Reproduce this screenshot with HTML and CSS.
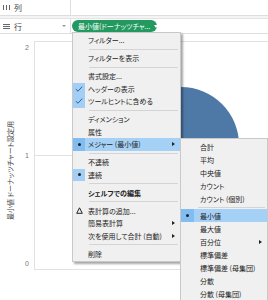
FILE: index.html
```html
<!DOCTYPE html>
<html lang="ja">
<head>
  <meta charset="UTF-8" />
  <title>行シェルフ メニュー</title>
  <link rel="stylesheet" href="styles.css">
</head>
<body>

<!-- シェルフ -->
<div class="shelves">
  <div class="shelf">
    <div class="shelf-label">
      <svg class="shelf-icon" width="7" height="7" viewBox="0 0 7 7"><path d="M0.5 1v5M3.5 1v5M6.5 1v5" stroke="#666" stroke-width="1"/></svg>
      <span>列</span>
    </div>
    <div class="shelf-drop"></div>
  </div>
  <div class="shelf shelf-rows">
    <div class="shelf-label">
      <svg class="shelf-icon" width="7" height="7" viewBox="0 0 7 7"><path d="M0 1.5h7M0 3.5h7M0 5.5h7" stroke="#666" stroke-width="1"/></svg>
      <span>行</span>
      <span class="caret-grey"></span>
    </div>
    <div class="shelf-drop">
      <span class="pill">最小値(ドーナッツチャ...<span class="caret-white"></span></span>
    </div>
  </div>
</div>

<!-- ビュー -->
<div class="view">
  <div class="axis-title"><span>最小値 ドーナッツチャート設定用</span></div>
  <div class="axis-ticks">
    <span>2</span>
    <span>1</span>
    <span>0</span>
  </div>
  <div class="pane">
    <div class="band"></div>
    <div class="band"></div>
    <div class="pie"></div>
  </div>
</div>

<!-- コンテキストメニュー -->
<div class="menu main-menu">
  <div class="item"><span class="ico"></span><span class="label">フィルター...</span></div>
  <div class="sep"></div>
  <div class="item"><span class="ico"></span><span class="label">フィルターを表示</span></div>
  <div class="sep"></div>
  <div class="item"><span class="ico"></span><span class="label">書式設定...</span></div>
  <div class="item"><span class="ico on"><svg width="8" height="6" viewBox="0 0 8 6"><path d="M0.8 3.2l2.2 2 4.2-4.6" fill="none" stroke="#2f5f93" stroke-width="1"/></svg></span><span class="label">ヘッダーの表示</span></div>
  <div class="item"><span class="ico on"><svg width="8" height="6" viewBox="0 0 8 6"><path d="M0.8 3.2l2.2 2 4.2-4.6" fill="none" stroke="#2f5f93" stroke-width="1"/></svg></span><span class="label">ツールヒントに含める</span></div>
  <div class="sep"></div>
  <div class="item"><span class="ico"></span><span class="label">ディメンション</span></div>
  <div class="item"><span class="ico"></span><span class="label">属性</span></div>
  <div class="item hl"><span class="ico"><i class="dot"></i></span><span class="label">メジャー (最小値)</span><span class="arrow"></span></div>
  <div class="sep"></div>
  <div class="item"><span class="ico"></span><span class="label">不連続</span></div>
  <div class="item"><span class="ico on"><i class="dot"></i></span><span class="label">連続</span></div>
  <div class="sep"></div>
  <div class="item"><span class="ico"></span><span class="label strong">シェルフでの編集</span></div>
  <div class="sep"></div>
  <div class="item"><span class="ico"><svg width="7" height="7" viewBox="0 0 7 7"><path d="M3.5 0.8L6.3 6.3H0.7z" fill="none" stroke="#222" stroke-width="1"/></svg></span><span class="label">表計算の追加...</span></div>
  <div class="item"><span class="ico"></span><span class="label">簡易表計算</span><span class="arrow"></span></div>
  <div class="item"><span class="ico"></span><span class="label">次を使用して合計 (自動)</span><span class="arrow"></span></div>
  <div class="sep"></div>
  <div class="item"><span class="ico"></span><span class="label">削除</span></div>
</div>

<!-- サブメニュー -->
<div class="menu sub-menu">
  <div class="item"><span class="ico"></span><span class="label">合計</span></div>
  <div class="item"><span class="ico"></span><span class="label">平均</span></div>
  <div class="item"><span class="ico"></span><span class="label">中央値</span></div>
  <div class="item"><span class="ico"></span><span class="label">カウント</span></div>
  <div class="item"><span class="ico"></span><span class="label">カウント (個別)</span></div>
  <div class="sep"></div>
  <div class="item hl"><span class="ico"><i class="dot"></i></span><span class="label">最小値</span></div>
  <div class="item"><span class="ico"></span><span class="label">最大値</span></div>
  <div class="item"><span class="ico"></span><span class="label">百分位</span><span class="arrow"></span></div>
  <div class="item"><span class="ico"></span><span class="label">標準偏差</span></div>
  <div class="item"><span class="ico"></span><span class="label">標準偏差 (母集団)</span></div>
  <div class="item"><span class="ico"></span><span class="label">分散</span></div>
  <div class="item"><span class="ico"></span><span class="label">分散 (母集団)</span></div>
</div>

</body>
</html>
```

FILE: styles.css
```css
body {
  margin: 0;
  width: 268px;
  height: 300px;
  overflow: hidden;
  position: relative;
  background: #fff;
  font-family: "Noto Sans CJK JP", "Noto Sans", sans-serif;
  font-size: 7px;
  font-feature-settings: "palt";
  color: #333;
}

/* シェルフ */
.shelves {
  background: #f4f4f4;
}

.shelf {
  display: flex;
  height: 15px;
  background: #fff;
  border-bottom: 1px solid #dedede;
}

.shelf-rows {
  margin-top: 2px;
  height: 14px;
  border-top: 1px solid #e4e4e4;
}

.shelf-label {
  width: 71px;
  box-sizing: border-box;
  display: flex;
  align-items: center;
  padding-left: 3px;
  border-right: 1px solid #dedede;
  font-size: 8px;
  color: #444;
}

.shelf-icon {
  margin-right: 4px;
}

.caret-grey {
  margin-left: auto;
  margin-right: 4px;
  border-left: 2px solid transparent;
  border-right: 2px solid transparent;
  border-top: 2px solid #999;
}

.shelf-drop {
  flex: 1;
  display: flex;
  align-items: center;
  padding-left: 1px;
}

/* 緑のピル */
.pill {
  display: flex;
  align-items: center;
  height: 12px;
  width: 85px;
  box-sizing: border-box;
  padding-left: 6px;
  border-radius: 6px;
  background: #22995f;
  color: #fff;
  font-size: 7px;
  white-space: nowrap;
}

.caret-white {
  margin-left: 4px;
  border-left: 2.5px solid transparent;
  border-right: 2.5px solid transparent;
  border-top: 3px solid #fff;
}

/* ビュー */
.view {
  display: flex;
  height: 266px;
  padding-top: 7px;
  box-sizing: border-box;
}

.axis-title {
  width: 20px;
  display: flex;
  align-items: center;
  justify-content: center;
}

/* 軸タイトルは下から上へ */
.axis-title span {
  writing-mode: vertical-rl;
  text-orientation: sideways;
  transform: rotate(180deg);
  font-size: 7px;
  color: #444;
  white-space: nowrap;
}

.axis-ticks {
  width: 9px;
  display: flex;
  flex-direction: column;
  justify-content: space-between;
  padding-right: 5px;
  text-align: right;
  line-height: 12px;
  color: #777;
  font-family: "Liberation Sans", sans-serif;
  font-size: 7px;
  height: 228px;
  margin-top: 1px;
}

.pane {
  flex: 1;
  position: relative;
  display: flex;
  flex-direction: column;
  border-left: 1px solid #e2e2e2;
  border-top: 1px solid #e2e2e2;
  height: 228px;
}

.band {
  flex: 1;
  border-bottom: 1px solid #e2e2e2;
}

.pie {
  position: absolute;
  left: 88px;
  top: 45px;
  width: 116px;
  height: 116px;
  border-radius: 50%;
  background: #4e79a7;
}

/* メニュー */
.menu {
  position: absolute;
  background: #f0f0f0;
  border: 1px solid #c8c8c8;
  box-shadow: 2px 2px 2px rgba(0, 0, 0, 0.35);
  color: #222;
}

.main-menu {
  left: 72px;
  top: 32px;
  width: 107px;
  padding: 1px 0 1px;
}

.sub-menu {
  left: 180px;
  top: 138px;
  width: 86px;
  padding-top: 1px;
}

.item {
  display: flex;
  align-items: center;
  height: 12.5px;
  white-space: nowrap;
}

.sub-menu .item {
  height: 13px;
}

.ico {
  width: 12px;
  height: 100%;
  display: flex;
  align-items: center;
  justify-content: center;
}

.sub-menu .ico {
  width: 13px;
}

.ico.on {
  background: #a3cff6;
}

.label {
  margin-left: 3px;
}

.sub-menu .label {
  margin-left: 6px;
}

.label.strong {
  font-weight: bold;
}

.dot {
  width: 3px;
  height: 3px;
  border-radius: 50%;
  background: #222;
}

.item.hl {
  background: #a6d1f7;
}

.item.hl .ico {
  background: #82bdf1;
}

.arrow {
  margin-left: auto;
  margin-right: 5px;
  border-top: 2.5px solid transparent;
  border-bottom: 2.5px solid transparent;
  border-left: 3px solid #222;
}

.sep {
  height: 5.5px;
  display: flex;
  align-items: center;
  padding-left: 16px;
  padding-right: 2px;
}

.sep::after {
  content: '';
  flex: 1;
  height: 1px;
  background: #d4d4d4;
}

.sub-menu .sep {
  height: 4px;
  padding-left: 17px;
}
```
